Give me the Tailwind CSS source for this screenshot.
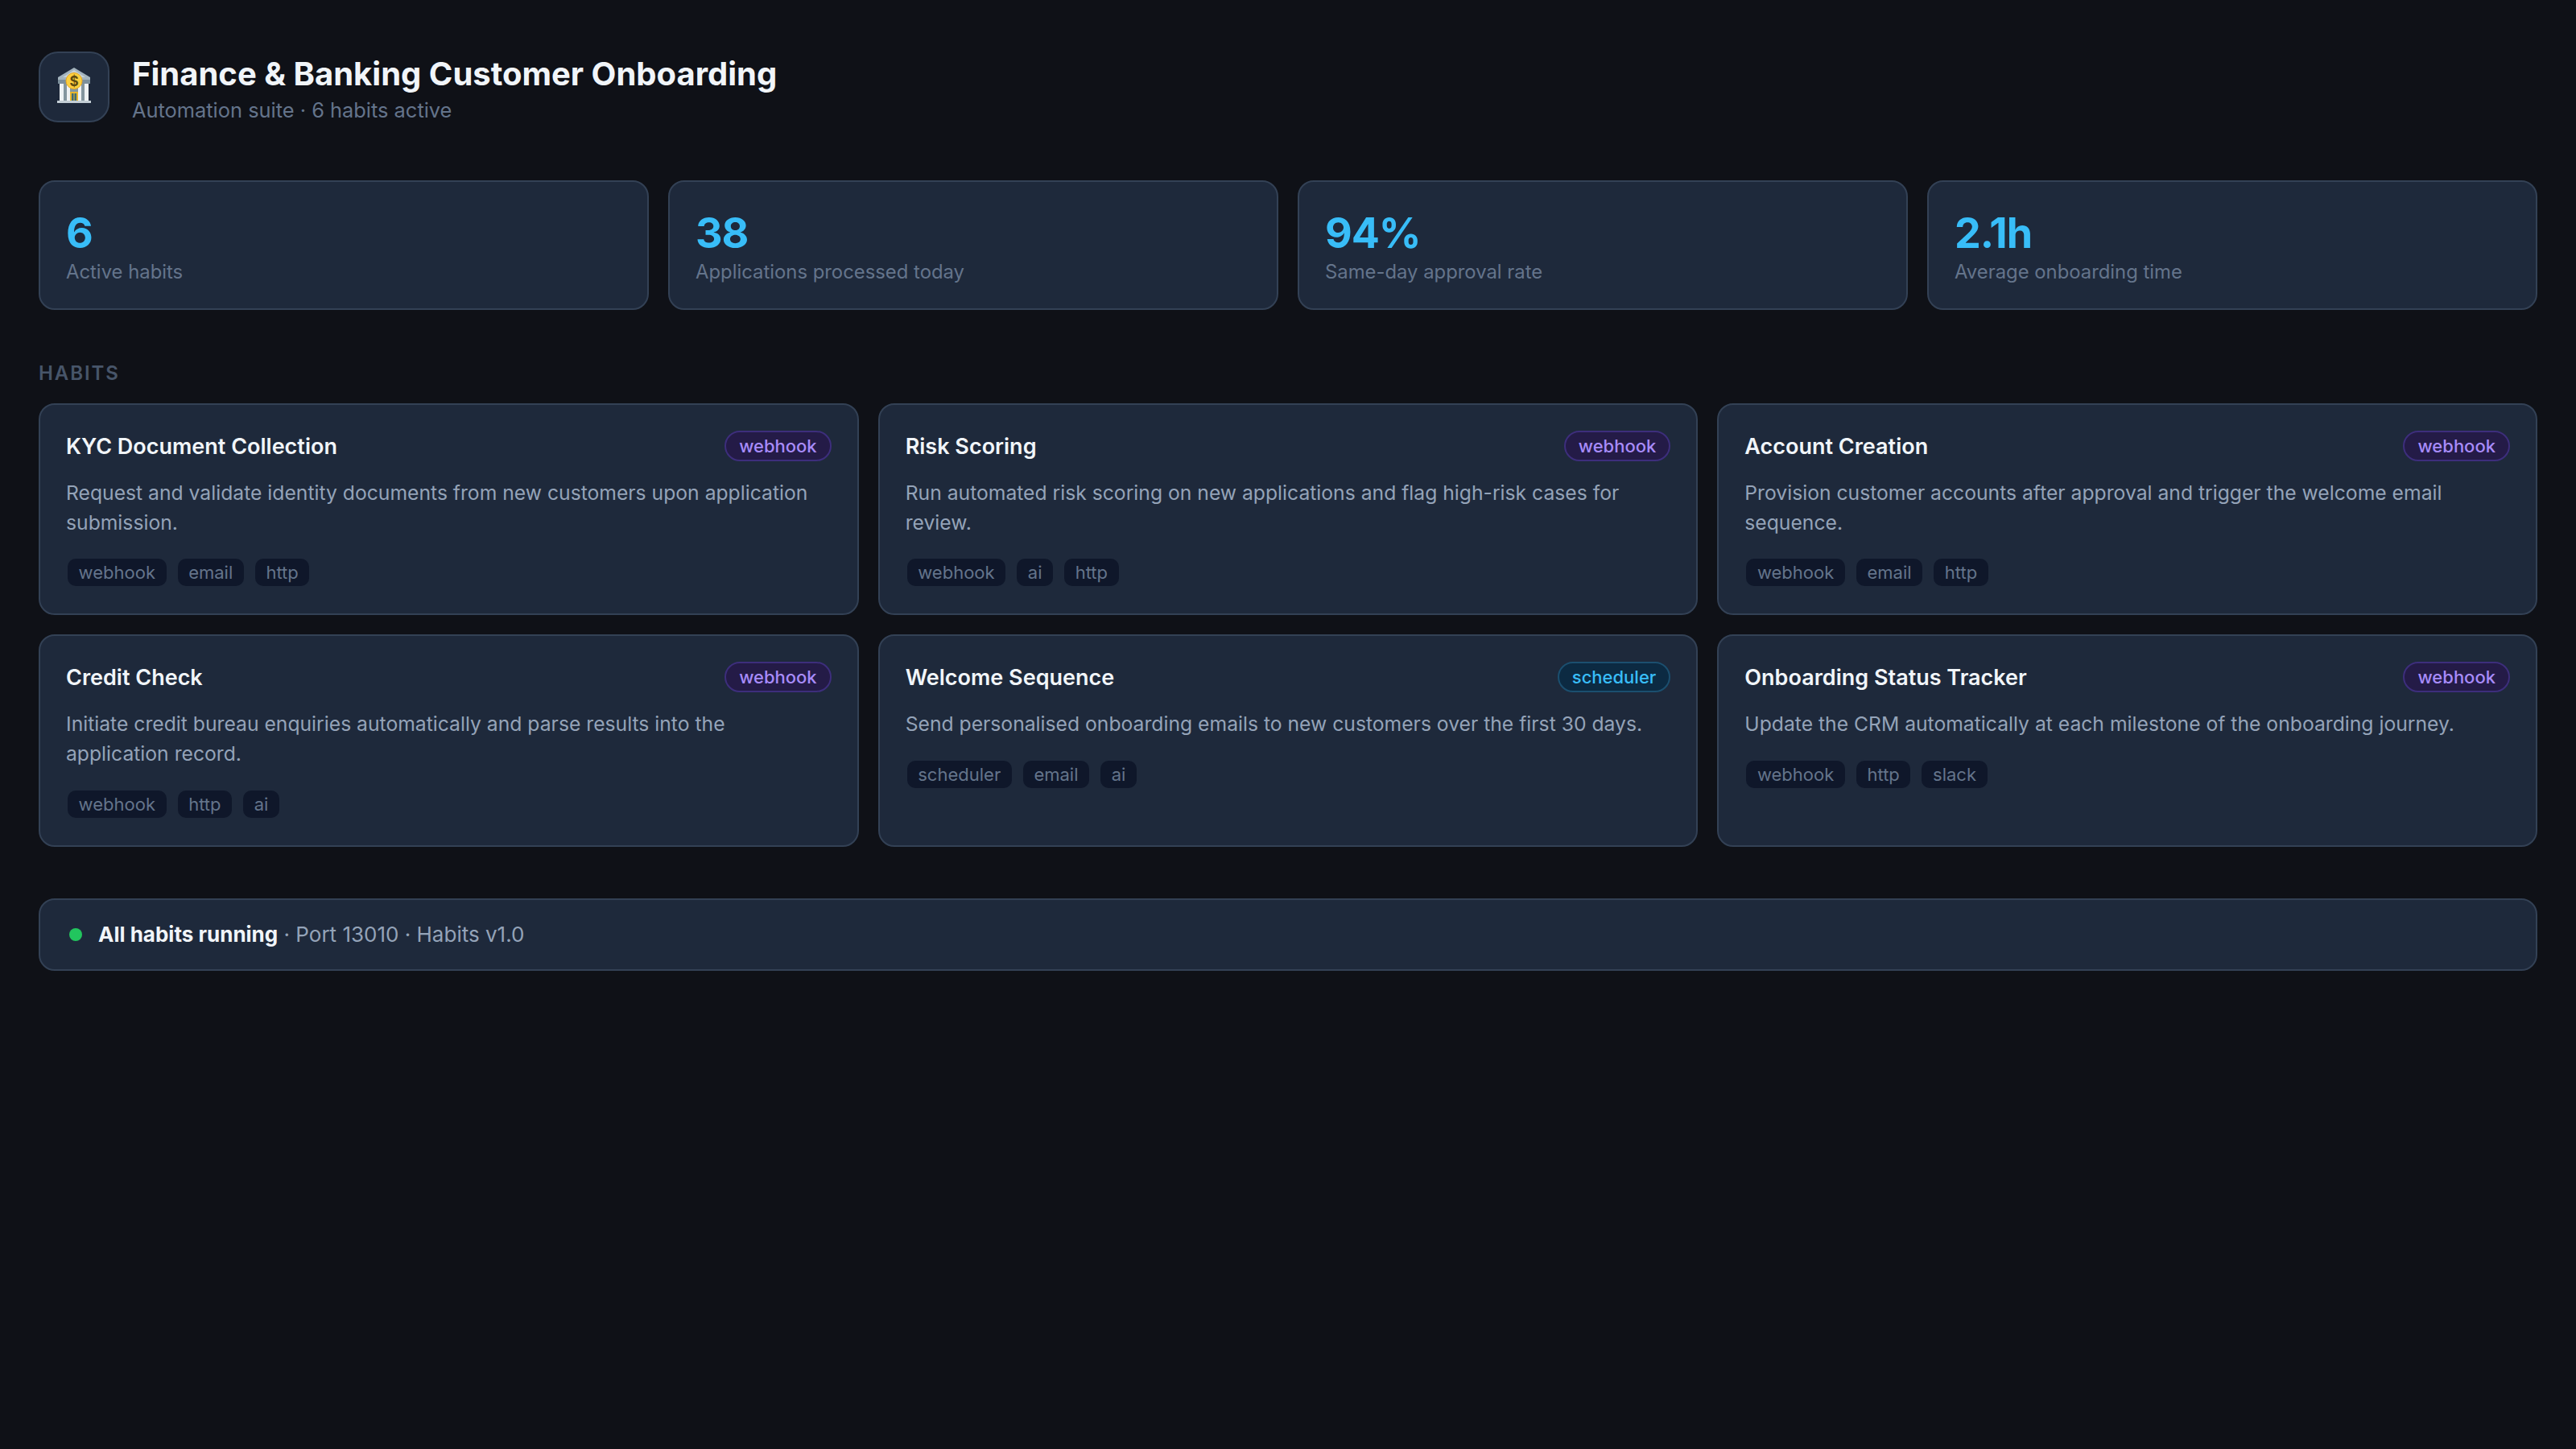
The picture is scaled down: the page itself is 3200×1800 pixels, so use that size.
<!DOCTYPE html>
<html lang="en">
<head>
<meta charset="UTF-8">
<title>Finance &amp; Banking Customer Onboarding</title>
<script src="https://cdn.jsdelivr.net/npm/@tailwindcss/browser@4"></script>
</head>
<body class="bg-[#0f1117] font-['Inter',sans-serif] min-h-screen">
<div class="px-12 pt-16 pb-16">
    <!-- Header -->
    <header class="flex items-center gap-7 mb-[72px]">
        <div class="w-[88px] h-[88px] rounded-[24px] bg-[#1e293b] border-2 border-[#334155] flex items-center justify-center">
            <svg class="-mt-1" width="44" height="44" viewBox="0 0 44 44">
                <path d="M22 0 L42 12 L42 15 L2 15 L2 12 Z" fill="#a3b3bd"/>
                <path d="M22 3 L36 12 L8 12 Z" fill="#c6d1d8"/>
                <rect x="2" y="15" width="40" height="5" fill="#7c8f9b"/>
                <rect x="4" y="20" width="36" height="21" fill="#84969f"/>
                <rect x="4" y="20" width="5" height="21" fill="#eef2f4"/>
                <rect x="13" y="20" width="4" height="21" fill="#eef2f4"/>
                <rect x="27" y="20" width="4" height="21" fill="#eef2f4"/>
                <rect x="35" y="20" width="5" height="21" fill="#eef2f4"/>
                <rect x="17" y="30" width="10" height="11" fill="#e6b52c"/>
                <rect x="19" y="32" width="2.5" height="9" fill="#3f6c74"/>
                <rect x="22.5" y="32" width="2.5" height="9" fill="#3f6c74"/>
                <rect x="1" y="41" width="42" height="3" fill="#c3ced5"/>
                <circle cx="22" cy="16.5" r="10" fill="#fbcf3e" stroke="#e9a820" stroke-width="1"/>
                <text x="22" y="22.5" text-anchor="middle" font-family="Inter" font-size="17" font-weight="700" fill="#5f4a10">$</text>
            </svg>
        </div>
        <div class="pt-[2px]">
            <h1 class="text-[40px] leading-[50px] font-bold text-[#f1f5f9]">Finance &amp; Banking Customer Onboarding</h1>
            <p class="text-[25.4px] leading-[31px] mt-1 text-[#64748b]">Automation suite · 6 habits active</p>
        </div>
    </header>

    <!-- Stats -->
    <section class="grid grid-cols-4 gap-6 mb-16">
        <div class="bg-[#1e293b] border-2 border-[#334155] rounded-[20px] px-8 pt-8 pb-[31px]">
            <div class="text-[52px] leading-[63px] font-bold tracking-[-1.04px] text-[#38bdf8]">6</div>
            <div class="text-[23.85px] leading-[29px] mt-[2px] text-[#64748b]">Active habits</div>
        </div>
        <div class="bg-[#1e293b] border-2 border-[#334155] rounded-[20px] px-8 pt-8 pb-[31px]">
            <div class="text-[52px] leading-[63px] font-bold tracking-[-1.04px] text-[#38bdf8]">38</div>
            <div class="text-[23.85px] leading-[29px] mt-[2px] text-[#64748b]">Applications processed today</div>
        </div>
        <div class="bg-[#1e293b] border-2 border-[#334155] rounded-[20px] px-8 pt-8 pb-[31px]">
            <div class="text-[52px] leading-[63px] font-bold tracking-[-1.04px] text-[#38bdf8]">94%</div>
            <div class="text-[23.85px] leading-[29px] mt-[2px] text-[#64748b]">Same-day approval rate</div>
        </div>
        <div class="bg-[#1e293b] border-2 border-[#334155] rounded-[20px] px-8 pt-8 pb-[31px]">
            <div class="text-[52px] leading-[63px] font-bold tracking-[-1.04px] text-[#38bdf8]">2.1h</div>
            <div class="text-[23.85px] leading-[29px] mt-[2px] text-[#64748b]">Average onboarding time</div>
        </div>
    </section>

    <!-- Habits -->
    <h2 class="text-[24px] leading-[29px] font-semibold uppercase tracking-[1.92px] text-[#475569] mb-[23px]">Habits</h2>
    <section class="grid grid-cols-3 gap-6 mb-16">
        <article class="bg-[#1e293b] border-2 border-[#334155] rounded-[20px] p-8">
            <div class="flex items-center justify-between mb-[21px]">
                <h3 class="text-[27px] font-semibold leading-[1.2] pt-[2px] text-[#f1f5f9]">KYC Document Collection</h3>
                <span class="text-[22px] leading-[26px] font-medium rounded-full border-2 px-4 py-1 bg-[#241b47] border-[#3d2e7c] text-[#a78bfa]">webhook</span>
            </div>
            <p class="text-[24.7px] leading-[36.7px] text-[#94a3b8]">Request and validate identity documents from new customers upon application submission.</p>
            <div class="flex gap-[14px] mx-[2px] mt-[27px] mb-[2px]">
                <span class="text-[22px] leading-[26px] px-[13.6px] py-1 rounded-[10px] bg-[#0f172a] text-[#64748b]">webhook</span>
                <span class="text-[22px] leading-[26px] px-[13.6px] py-1 rounded-[10px] bg-[#0f172a] text-[#64748b]">email</span>
                <span class="text-[22px] leading-[26px] px-[13.6px] py-1 rounded-[10px] bg-[#0f172a] text-[#64748b]">http</span>
            </div>
        </article>
        <article class="bg-[#1e293b] border-2 border-[#334155] rounded-[20px] p-8">
            <div class="flex items-center justify-between mb-[21px]">
                <h3 class="text-[27px] font-semibold leading-[1.2] pt-[2px] text-[#f1f5f9]">Risk Scoring</h3>
                <span class="text-[22px] leading-[26px] font-medium rounded-full border-2 px-4 py-1 bg-[#241b47] border-[#3d2e7c] text-[#a78bfa]">webhook</span>
            </div>
            <p class="text-[24.7px] leading-[36.7px] text-[#94a3b8]">Run automated risk scoring on new applications and flag high-risk cases for review.</p>
            <div class="flex gap-[14px] mx-[2px] mt-[27px] mb-[2px]">
                <span class="text-[22px] leading-[26px] px-[13.6px] py-1 rounded-[10px] bg-[#0f172a] text-[#64748b]">webhook</span>
                <span class="text-[22px] leading-[26px] px-[13.6px] py-1 rounded-[10px] bg-[#0f172a] text-[#64748b]">ai</span>
                <span class="text-[22px] leading-[26px] px-[13.6px] py-1 rounded-[10px] bg-[#0f172a] text-[#64748b]">http</span>
            </div>
        </article>
        <article class="bg-[#1e293b] border-2 border-[#334155] rounded-[20px] p-8">
            <div class="flex items-center justify-between mb-[21px]">
                <h3 class="text-[27px] font-semibold leading-[1.2] pt-[2px] text-[#f1f5f9]">Account Creation</h3>
                <span class="text-[22px] leading-[26px] font-medium rounded-full border-2 px-4 py-1 bg-[#241b47] border-[#3d2e7c] text-[#a78bfa]">webhook</span>
            </div>
            <p class="text-[24.7px] leading-[36.7px] text-[#94a3b8]">Provision customer accounts after approval and trigger the welcome email sequence.</p>
            <div class="flex gap-[14px] mx-[2px] mt-[27px] mb-[2px]">
                <span class="text-[22px] leading-[26px] px-[13.6px] py-1 rounded-[10px] bg-[#0f172a] text-[#64748b]">webhook</span>
                <span class="text-[22px] leading-[26px] px-[13.6px] py-1 rounded-[10px] bg-[#0f172a] text-[#64748b]">email</span>
                <span class="text-[22px] leading-[26px] px-[13.6px] py-1 rounded-[10px] bg-[#0f172a] text-[#64748b]">http</span>
            </div>
        </article>
        <article class="bg-[#1e293b] border-2 border-[#334155] rounded-[20px] p-8">
            <div class="flex items-center justify-between mb-[21px]">
                <h3 class="text-[27px] font-semibold leading-[1.2] pt-[2px] text-[#f1f5f9]">Credit Check</h3>
                <span class="text-[22px] leading-[26px] font-medium rounded-full border-2 px-4 py-1 bg-[#241b47] border-[#3d2e7c] text-[#a78bfa]">webhook</span>
            </div>
            <p class="text-[24.7px] leading-[36.7px] text-[#94a3b8]">Initiate credit bureau enquiries automatically and parse results into the application record.</p>
            <div class="flex gap-[14px] mx-[2px] mt-[27px] mb-[2px]">
                <span class="text-[22px] leading-[26px] px-[13.6px] py-1 rounded-[10px] bg-[#0f172a] text-[#64748b]">webhook</span>
                <span class="text-[22px] leading-[26px] px-[13.6px] py-1 rounded-[10px] bg-[#0f172a] text-[#64748b]">http</span>
                <span class="text-[22px] leading-[26px] px-[13.6px] py-1 rounded-[10px] bg-[#0f172a] text-[#64748b]">ai</span>
            </div>
        </article>
        <article class="bg-[#1e293b] border-2 border-[#334155] rounded-[20px] p-8">
            <div class="flex items-center justify-between mb-[21px]">
                <h3 class="text-[27px] font-semibold leading-[1.2] pt-[2px] text-[#f1f5f9]">Welcome Sequence</h3>
                <span class="text-[22px] leading-[26px] font-medium rounded-full border-2 px-4 py-1 bg-[#0c2a42] border-[#1b4f6f] text-[#38bdf8]">scheduler</span>
            </div>
            <p class="text-[24.7px] leading-[36.7px] text-[#94a3b8]">Send personalised onboarding emails to new customers over the first 30 days.</p>
            <div class="flex gap-[14px] mx-[2px] mt-[27px] mb-[2px]">
                <span class="text-[22px] leading-[26px] px-[13.6px] py-1 rounded-[10px] bg-[#0f172a] text-[#64748b]">scheduler</span>
                <span class="text-[22px] leading-[26px] px-[13.6px] py-1 rounded-[10px] bg-[#0f172a] text-[#64748b]">email</span>
                <span class="text-[22px] leading-[26px] px-[13.6px] py-1 rounded-[10px] bg-[#0f172a] text-[#64748b]">ai</span>
            </div>
        </article>
        <article class="bg-[#1e293b] border-2 border-[#334155] rounded-[20px] p-8">
            <div class="flex items-center justify-between mb-[21px]">
                <h3 class="text-[27px] font-semibold leading-[1.2] pt-[2px] text-[#f1f5f9]">Onboarding Status Tracker</h3>
                <span class="text-[22px] leading-[26px] font-medium rounded-full border-2 px-4 py-1 bg-[#241b47] border-[#3d2e7c] text-[#a78bfa]">webhook</span>
            </div>
            <p class="text-[24.7px] leading-[36.7px] text-[#94a3b8]">Update the CRM automatically at each milestone of the onboarding journey.</p>
            <div class="flex gap-[14px] mx-[2px] mt-[27px] mb-[2px]">
                <span class="text-[22px] leading-[26px] px-[13.6px] py-1 rounded-[10px] bg-[#0f172a] text-[#64748b]">webhook</span>
                <span class="text-[22px] leading-[26px] px-[13.6px] py-1 rounded-[10px] bg-[#0f172a] text-[#64748b]">http</span>
                <span class="text-[22px] leading-[26px] px-[13.6px] py-1 rounded-[10px] bg-[#0f172a] text-[#64748b]">slack</span>
            </div>
        </article>
    </section>

    <!-- Footer status -->
    <footer class="flex items-center gap-5 bg-[#1e293b] border-2 border-[#334155] rounded-[20px] px-9 py-[25px] text-[26px] leading-[36px] text-[#94a3b8]">
        <span class="w-4 h-4 rounded-full bg-[#22c55e]"></span>
        <span><strong class="font-bold text-[#f1f5f9]">All habits running</strong> · Port 13010 · Habits v1.0</span>
    </footer>
</div>
</body>
</html>
